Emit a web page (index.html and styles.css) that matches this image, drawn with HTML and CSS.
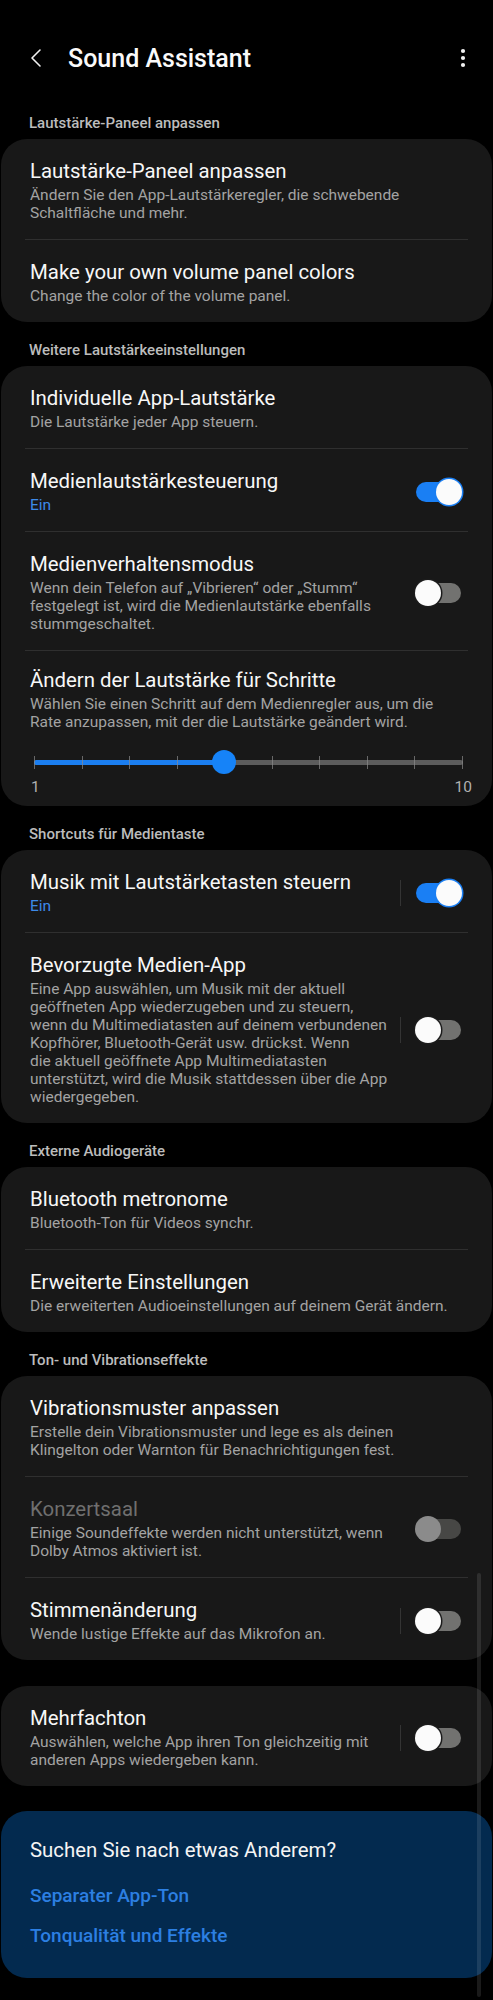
FILE: index.html
```html
<!DOCTYPE html>
<html lang="de">
<head>
  <meta charset="UTF-8">
  <meta name="viewport" content="width=device-width, initial-scale=1.0">
  <title>Sound Assistant</title>
  <link rel="stylesheet" href="styles.css">
</head>
<body>
<div class="screen">
  <header class="appbar">
    <button class="icon-btn back" aria-label="Zurück">
      <svg width="14" height="20" viewBox="0 0 14 20"><path d="M11 2 L3 10 L11 18" fill="none" stroke="#f2f2f2" stroke-width="1.6" stroke-linecap="round" stroke-linejoin="round"/></svg>
    </button>
    <h1 class="appbar-title">Sound Assistant</h1>
    <button class="icon-btn more" aria-label="Mehr">
      <svg width="6" height="20" viewBox="0 0 6 20"><circle cx="3" cy="3" r="2.1" fill="#f2f2f2"/><circle cx="3" cy="10" r="2.1" fill="#f2f2f2"/><circle cx="3" cy="17" r="2.1" fill="#f2f2f2"/></svg>
    </button>
  </header>

  <div class="section-label first">Lautstärke-Paneel anpassen</div>
  <section class="card">
    <div class="item">
      <div class="item-text">
        <div class="item-title">Lautstärke-Paneel anpassen</div>
        <div class="item-sub">Ändern Sie den App-Lautstärkeregler, die schwebende<br>Schaltfläche und mehr.</div>
      </div>
    </div>
    <div class="item">
      <div class="item-text">
        <div class="item-title">Make your own volume panel colors</div>
        <div class="item-sub">Change the color of the volume panel.</div>
      </div>
    </div>
  </section>

  <div class="section-label">Weitere Lautstärkeeinstellungen</div>
  <section class="card">
    <div class="item">
      <div class="item-text">
        <div class="item-title">Individuelle App-Lautstärke</div>
        <div class="item-sub">Die Lautstärke jeder App steuern.</div>
      </div>
    </div>
    <div class="item">
      <div class="item-text">
        <div class="item-title">Medienlautstärkesteuerung</div>
        <div class="item-status">Ein</div>
      </div>
      <span class="switch on"></span>
    </div>
    <div class="item">
      <div class="item-text">
        <div class="item-title">Medienverhaltensmodus</div>
        <div class="item-sub">Wenn dein Telefon auf „Vibrieren“ oder „Stumm“<br>festgelegt ist, wird die Medienlautstärke ebenfalls<br>stummgeschaltet.</div>
      </div>
      <span class="switch"></span>
    </div>
    <div class="item slider-item">
      <div class="item-text">
        <div class="item-title">Ändern der Lautstärke für Schritte</div>
        <div class="item-sub">Wählen Sie einen Schritt auf dem Medienregler aus, um die<br>Rate anzupassen, mit der die Lautstärke geändert wird.</div>
        <div class="slider">
          <div class="slider-track">
            <div class="slider-fill"></div>
            <div class="slider-ticks">
              <i></i><i></i><i></i><i></i><i></i><i></i><i></i><i></i><i></i><i></i>
            </div>
            <div class="slider-thumb"></div>
          </div>
          <div class="slider-labels"><span>1</span><span>10</span></div>
        </div>
      </div>
    </div>
  </section>

  <div class="section-label">Shortcuts für Medientaste</div>
  <section class="card">
    <div class="item">
      <div class="item-text">
        <div class="item-title">Musik mit Lautstärketasten steuern</div>
        <div class="item-status">Ein</div>
      </div>
      <span class="vsep"></span>
      <span class="switch on"></span>
    </div>
    <div class="item">
      <div class="item-text">
        <div class="item-title">Bevorzugte Medien-App</div>
        <div class="item-sub">Eine App auswählen, um Musik mit der aktuell<br>geöffneten App wiederzugeben und zu steuern,<br>wenn du Multimediatasten auf deinem verbundenen<br>Kopfhörer, Bluetooth-Gerät usw. drückst. Wenn<br>die aktuell geöffnete App Multimediatasten<br>unterstützt, wird die Musik stattdessen über die App<br>wiedergegeben.</div>
      </div>
      <span class="vsep"></span>
      <span class="switch"></span>
    </div>
  </section>

  <div class="section-label">Externe Audiogeräte</div>
  <section class="card">
    <div class="item">
      <div class="item-text">
        <div class="item-title">Bluetooth metronome</div>
        <div class="item-sub">Bluetooth-Ton für Videos synchr.</div>
      </div>
    </div>
    <div class="item">
      <div class="item-text">
        <div class="item-title">Erweiterte Einstellungen</div>
        <div class="item-sub">Die erweiterten Audioeinstellungen auf deinem Gerät ändern.</div>
      </div>
    </div>
  </section>

  <div class="section-label">Ton- und Vibrationseffekte</div>
  <section class="card">
    <div class="item">
      <div class="item-text">
        <div class="item-title">Vibrationsmuster anpassen</div>
        <div class="item-sub">Erstelle dein Vibrationsmuster und lege es als deinen<br>Klingelton oder Warnton für Benachrichtigungen fest.</div>
      </div>
    </div>
    <div class="item disabled">
      <div class="item-text">
        <div class="item-title">Konzertsaal</div>
        <div class="item-sub">Einige Soundeffekte werden nicht unterstützt, wenn<br>Dolby Atmos aktiviert ist.</div>
      </div>
      <span class="switch"></span>
    </div>
    <div class="item">
      <div class="item-text">
        <div class="item-title">Stimmenänderung</div>
        <div class="item-sub">Wende lustige Effekte auf das Mikrofon an.</div>
      </div>
      <span class="vsep"></span>
      <span class="switch"></span>
    </div>
  </section>

  <section class="card spaced">
    <div class="item">
      <div class="item-text">
        <div class="item-title">Mehrfachton</div>
        <div class="item-sub">Auswählen, welche App ihren Ton gleichzeitig mit<br>anderen Apps wiedergeben kann.</div>
      </div>
      <span class="vsep"></span>
      <span class="switch"></span>
    </div>
  </section>

  <section class="card suggest">
    <div class="suggest-title">Suchen Sie nach etwas Anderem?</div>
    <a class="suggest-link">Separater App-Ton</a>
    <a class="suggest-link">Tonqualität und Effekte</a>
  </section>

  <div class="scrollbar"></div>
</div>
</body>
</html>
```

FILE: styles.css
```css
* {
    box-sizing: border-box;
}

body {
    margin: 0;
    background: #000;
    color: #f5f5f5;
    font-family: Roboto, "Noto Sans", "Liberation Sans", sans-serif;
}

.screen {
    position: relative;
    min-height: 2000px;
    padding-bottom: 25px;
}

/* top bar */
.appbar {
    display: flex;
    align-items: center;
    height: 100px;
    padding: 16px 22px 0 26px;
}

.icon-btn {
    background: none;
    border: 0;
    padding: 0;
    display: flex;
    align-items: center;
    justify-content: center;
}

.back {
    width: 20px;
    height: 24px;
}

.appbar-title {
    flex: 1;
    margin: 0 0 0 22px;
    font-size: 25px;
    font-weight: 500;
    color: #fafafa;
}

.more {
    width: 16px;
    height: 24px;
}

/* section labels */
.section-label {
    padding: 18px 29px 6px;
    font-size: 15px;
    line-height: 20px;
    font-weight: 500;
    color: #bcbcbc;
}

.section-label.first {
    padding-top: 13px;
}

/* cards */
.card {
    margin: 0 1px;
    background: #181818;
    border-radius: 26px;
}

.card.spaced {
    margin-top: 26px;
}

.item {
    display: flex;
    align-items: center;
    padding: 20px 31px 17px 29px;
    position: relative;
}

.item + .item::before {
    content: "";
    position: absolute;
    top: -1px;
    left: 24px;
    right: 24px;
    height: 1px;
    background: #2f2f2f;
}

.item + .item {
    margin-top: 1px;
}

.item-text {
    flex: 1;
    min-width: 0;
}

.item-title {
    font-size: 20.4px;
    line-height: 24px;
    color: #f7f7f7;
}

.item-sub {
    margin-top: 3px;
    font-size: 15.5px;
    line-height: 18px;
    color: #a3a3a3;
    white-space: nowrap;
}

.item-status {
    margin-top: 3px;
    font-size: 15.5px;
    line-height: 18px;
    color: #3d8ae8;
}

.item.disabled .item-title {
    color: #6f6f6f;
}

/* toggle switch */
.vsep {
    width: 1px;
    height: 26px;
    background: #343434;
    margin: 0 15px 0 8px;
    flex: none;
}

.switch {
    position: relative;
    flex: none;
    width: 45px;
    height: 20px;
    border-radius: 10px;
    background: #727270;
    margin-left: 8px;
}

.switch::after {
    content: "";
    position: absolute;
    top: -3px;
    left: -1px;
    width: 26px;
    height: 26px;
    border-radius: 50%;
    background: #fbfbfb;
    box-shadow: 0 0 0 1.5px #1c1c1c;
}

.switch.on {
    background: #1a7ff4;
}

.switch.on::after {
    left: auto;
    right: -1px;
    box-shadow: 0 0 0 1.5px #1a7ff4;
}

.item.disabled .switch {
    background: #474745;
}

.item.disabled .switch::after {
    background: #8b8b8b;
    box-shadow: none;
}

.vsep + .switch {
    margin-left: 0;
}

/* step slider */
.slider-item {
    padding-top: 17px;
    padding-bottom: 10px;
    padding-right: 24px;
}

.slider {
    margin-top: 19px;
    padding: 0 5px 0 4px;
}

.slider-track {
    position: relative;
    height: 24px;
}

.slider-track::before {
    content: "";
    position: absolute;
    left: 0;
    right: 0;
    top: 10px;
    height: 5px;
    border-radius: 3px;
    background: #5c5c5c;
}

.slider-fill {
    position: absolute;
    left: 0;
    top: 10px;
    height: 5px;
    width: 44.4%;
    border-radius: 3px;
    background: #1b7ef0;
}

.slider-ticks {
    position: absolute;
    left: 0;
    right: 0;
    top: 6px;
    display: flex;
    justify-content: space-between;
}

.slider-ticks i {
    width: 1px;
    height: 13px;
    background: #8a8a8a;
    opacity: 0.7;
}

.slider-thumb {
    position: absolute;
    top: 0;
    left: 44.4%;
    width: 24px;
    height: 24px;
    margin-left: -12px;
    border-radius: 50%;
    background: #1683f8;
}

.slider-labels {
    display: flex;
    justify-content: space-between;
    margin: 4px -9px 0 -3px;
    font-size: 15.5px;
    line-height: 18px;
    color: #b0b0b0;
}

/* suggestions */
.suggest {
    margin-top: 25px;
    background: #032a4f;
    padding: 27px 29px 30px;
}

.suggest-title {
    font-size: 20.4px;
    line-height: 24px;
    color: #f5f5f5;
}

.suggest-link {
    display: block;
    margin-top: 22px;
    font-size: 19px;
    line-height: 24px;
    font-weight: 500;
    color: #2c7fe2;
}

.suggest-link + .suggest-link {
    margin-top: 16px;
}

.scrollbar {
    position: absolute;
    left: 477px;
    top: 1573px;
    width: 4px;
    height: 424px;
    border-radius: 2px;
    background: rgba(255, 255, 255, 0.1);
}
```
